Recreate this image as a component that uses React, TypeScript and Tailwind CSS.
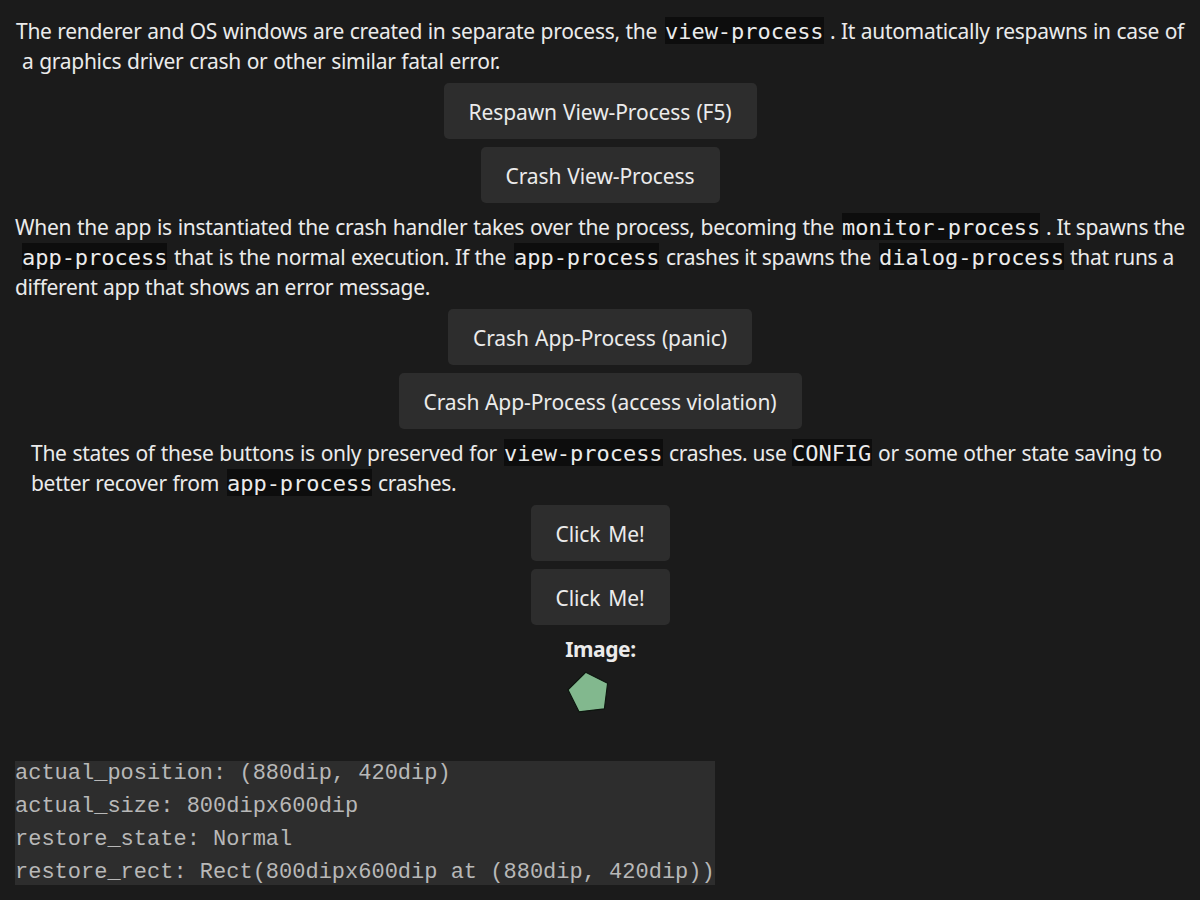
import type { ReactNode } from "react";

function Line({ children, className = "" }: { children: ReactNode; className?: string }) {
  return <div className={`flex h-[30px] items-center ${className}`}>{children}</div>;
}

function Run({ children, className }: { children: string; className: string }) {
  return (
    <span className={`shrink-0 whitespace-nowrap [text-align-last:justify] ${className}`}>{children}</span>
  );
}

function Code({ children, className = "" }: { children: string; className?: string }) {
  return (
    <code
      className={`mb-px h-[27px] shrink-0 whitespace-nowrap bg-[#0d0d0d] font-['DejaVu_Sans_Mono',monospace] text-[22px] leading-[29px] tracking-[-0.03px] ${className}`}
    >
      {children}
    </code>
  );
}

function Button({ children, className }: { children: string; className: string }) {
  return (
    <button
      className={`h-14 shrink-0 whitespace-nowrap rounded-[5px] bg-[#2d2d2d] px-[25px] pt-px tracking-[-0.1px] [text-align-last:justify] ${className}`}
    >
      {children}
    </button>
  );
}

export default function App() {
  return (
    <main className="flex h-[900px] w-[1200px] flex-col items-center overflow-hidden bg-[#1b1b1b] font-['Noto_Sans',sans-serif] text-[21px] leading-[30px] tracking-[-0.3px] text-[#ebebeb]">
      <section className="w-full pt-4 pb-[7px]">
        <Line className="pl-[16px]">
          <Run className="w-[641px]">The renderer and OS windows are created in separate process, the</Run>
          <Code className="ml-[8px] w-[159px]">view-process</Code>
          <Run className="ml-[6px] w-[354px]">. It automatically respawns in case of</Run>
        </Line>
        <Line className="pl-[22px]">
          <Run className="w-[478px]">a graphics driver crash or other similar fatal error.</Run>
        </Line>
      </section>
      <div className="flex flex-col items-center gap-2">
        <Button className="w-[313px]">Respawn View-Process (F5)</Button>
        <Button className="w-[239px]">Crash View-Process</Button>
      </div>
      <section className="w-full pt-[9px] pb-[7px]">
        <Line className="pl-[15px]">
          <Run className="w-[819px]">
            When the app is instantiated the crash handler takes over the process, becoming the
          </Run>
          <Code className="ml-[8px] w-[198px]">monitor-process</Code>
          <Run className="ml-[6px] w-[138px]">. It spawns the</Run>
        </Line>
        <Line className="pl-[22px]">
          <Code className="w-[145px]">app-process</Code>
          <Run className="ml-[7px] w-[332px]">that is the normal execution. If the</Run>
          <Code className="ml-[8px] w-[145px]">app-process</Code>
          <Run className="ml-[7px] w-[205px]">crashes it spawns the</Run>
          <Code className="ml-[8px] w-[185px]">dialog-process</Code>
          <Run className="ml-[6px] w-[103px]">that runs a</Run>
        </Line>
        <Line className="pl-[15px]">
          <Run className="w-[415px]">different app that shows an error message.</Run>
        </Line>
      </section>
      <div className="flex flex-col items-center gap-2">
        <Button className="w-[304px]">Crash App-Process (panic)</Button>
        <Button className="w-[403px]">Crash App-Process (access violation)</Button>
      </div>
      <section className="w-full pt-[9px] pb-[7px]">
        <Line className="pl-[31px]">
          <Run className="w-[466px]">The states of these buttons is only preserved for</Run>
          <Code className="ml-[7px] w-[159px]">view-process</Code>
          <Run className="ml-[6px] w-[116px]">crashes. use</Run>
          <Code className="ml-[7px] w-[80px]">CONFIG</Code>
          <Run className="ml-[6px] w-[284px]">or some other state saving to</Run>
        </Line>
        <Line className="pl-[31px]">
          <Run className="w-[188px]">better recover from</Run>
          <Code className="ml-[8px] w-[145px]">app-process</Code>
          <Run className="ml-[6px] w-[77px]">crashes.</Run>
        </Line>
      </section>
      <div className="flex flex-col items-center gap-2">
        <Button className="w-[139px]">Click Me!</Button>
        <Button className="w-[139px]">Click Me!</Button>
      </div>
      <h2 className="mt-[9px] h-[30px] pl-px font-bold tracking-[-0.4px]">Image:</h2>
      <svg className="mt-[3px] mr-[24px] h-[50px] w-[50px] shrink-0" viewBox="0 0 50 50">
        <polygon
          points="22.7,5.2 44.6,16.3 41.4,41.8 16,44.8 5,22.7"
          fill="#82b88e"
          stroke="#0d160f"
          strokeWidth="1.2"
          strokeLinejoin="round"
        />
      </svg>
      <pre className="mt-[44px] ml-[15px] h-[124px] w-[700px] shrink-0 self-start bg-[#2d2d2d] font-['Liberation_Mono',monospace] text-[22px] leading-[33px] tracking-normal text-[#b8b8b8]">
        <span className="-mt-1 block">{`actual_position: (880dip, 420dip)
actual_size: 800dipx600dip
restore_state: Normal
restore_rect: Rect(800dipx600dip at (880dip, 420dip))`}</span>
      </pre>
    </main>
  );
}
